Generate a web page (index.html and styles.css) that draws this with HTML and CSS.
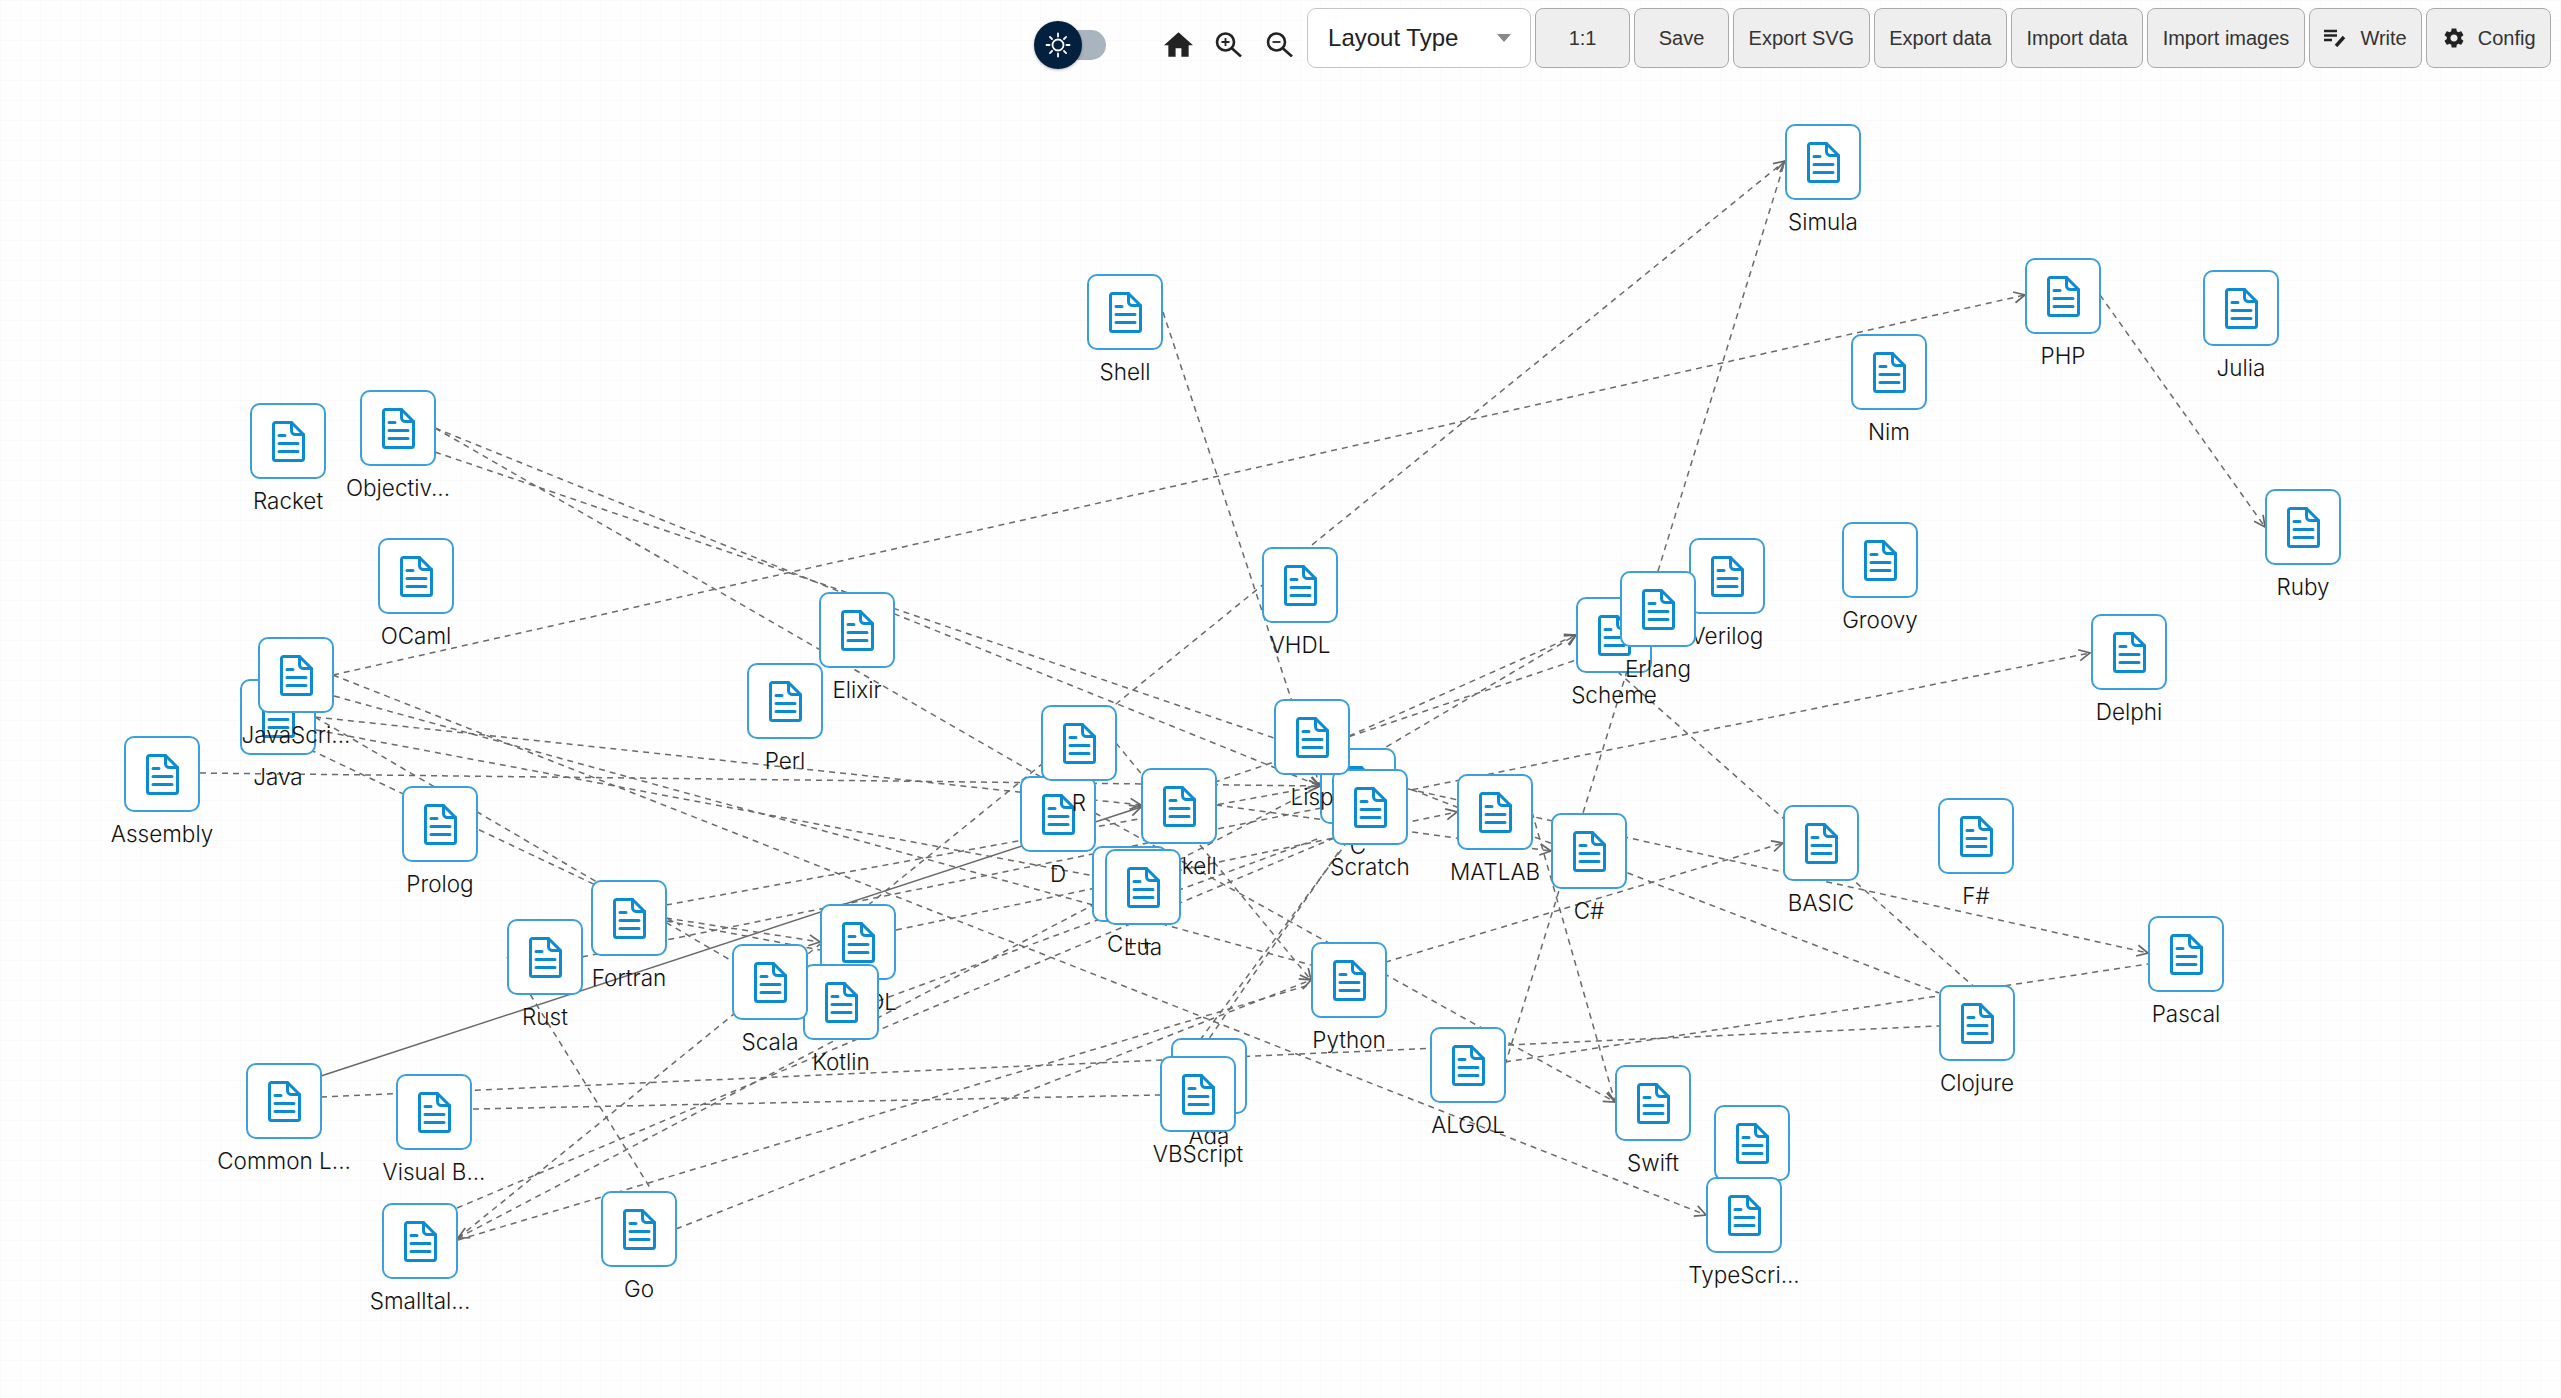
FILE: index.html
```html
<!DOCTYPE html>
<html lang="en">
<head>
<meta charset="utf-8">
<title>Graph</title>
<link rel="stylesheet" href="styles.css">
</head>
<body>
<svg class="defs" width="0" height="0" aria-hidden="true">
  <defs>
    <symbol id="doc" viewBox="0 0 33 41">
      <path class="doc-line" d="M19.5 1.5H3.5a2 2 0 0 0-2 2V37.5a2 2 0 0 0 2 2H29.5a2 2 0 0 0 2-2V13.5Z"/>
      <path class="doc-line" d="M19.5 1.5V9.5a4 4 0 0 0 4 4H31.5"/>
      <path class="doc-line" d="M7 14.5H13M7 22.5H26M7 30.5H26"/>
    </symbol>
    <marker id="arrow" markerUnits="userSpaceOnUse" markerWidth="18" markerHeight="16" refX="14" refY="8" orient="auto">
      <path class="arrowhead" d="M3 2.5L14 8L3 13.5"/>
    </marker>
  </defs>
</svg>

<main class="canvas">
  <svg class="edges" width="2561" height="1398" viewBox="0 0 2561 1398">
    <g class="edge-group">
      <line class="arrow" x1="2100" y1="295" x2="2265" y2="527"/>
      <line class="arrow" x1="333" y1="675" x2="2025" y2="295"/>
      <line class="arrow" x1="458" y1="1238" x2="1785" y2="161"/>
      <line class="arrow" x1="1163" y1="312" x2="1320" y2="786"/>
      <line class="arrow" x1="1505" y1="1065" x2="1785" y2="161"/>
      <line x1="1576" y1="635" x2="2015" y2="1023"/>
      <line class="arrow" x1="1349" y1="736" x2="1576" y2="635"/>
      <line class="arrow" x1="1320" y1="786" x2="1576" y2="635"/>
      <line class="solid arrow" x1="321" y1="1076" x2="1141" y2="807"/>
      <line x1="1141" y1="807" x2="1576" y2="660"/>
      <line class="arrow" x1="666" y1="918" x2="820" y2="942"/>
      <line x1="666" y1="921" x2="820" y2="950"/>
      <line x1="666" y1="905" x2="1320" y2="786"/>
      <line x1="315" y1="717" x2="807" y2="1005"/>
      <line x1="300" y1="745" x2="680" y2="925"/>
      <line class="arrow" x1="315" y1="717" x2="1141" y2="805"/>
      <line class="arrow" x1="200" y1="773" x2="1320" y2="786"/>
      <line class="arrow" x1="333" y1="675" x2="1706" y2="1215"/>
      <line x1="334" y1="696" x2="1311" y2="965"/>
      <line x1="316" y1="730" x2="1105" y2="878"/>
      <line class="arrow" x1="435" y1="428" x2="1320" y2="786"/>
      <line x1="435" y1="452" x2="1274" y2="738"/>
      <line x1="435" y1="428" x2="1095" y2="808"/>
      <line class="arrow" x1="1116" y1="743" x2="1311" y2="980"/>
      <line class="arrow" x1="1095" y1="813" x2="1615" y2="1102"/>
      <line class="arrow" x1="1532" y1="812" x2="1615" y2="1102"/>
      <line class="arrow" x1="1320" y1="786" x2="458" y2="1238"/>
      <line x1="457" y1="1208" x2="1334" y2="838"/>
      <line class="arrow" x1="896" y1="930" x2="1457" y2="812"/>
      <line x1="878" y1="1001" x2="1320" y2="838"/>
      <line class="arrow" x1="1216" y1="805" x2="1551" y2="851"/>
      <line class="arrow" x1="1300" y1="765" x2="2148" y2="953"/>
      <line x1="1340" y1="762" x2="1939" y2="993"/>
      <line class="arrow" x1="582" y1="957" x2="2090" y2="653"/>
      <line class="arrow" x1="458" y1="1240" x2="1783" y2="843"/>
      <line class="arrow" x1="676" y1="1229" x2="1311" y2="980"/>
      <line x1="321" y1="1097" x2="1939" y2="1026"/>
      <line x1="473" y1="1109" x2="1160" y2="1095"/>
      <line x1="1505" y1="1062" x2="2148" y2="964"/>
      <line x1="507" y1="957" x2="652" y2="1191"/>
      <line x1="1200" y1="1040" x2="1345" y2="845"/>
      <line x1="1197" y1="1056" x2="1340" y2="850"/>
    </g>
  </svg>

  <div class="node" style="left:1785px;top:124px"><div class="box"><svg class="doc"><use href="#doc"/></svg></div><span class="label">Simula</span></div>
  <div class="node" style="left:1087px;top:274px"><div class="box"><svg class="doc"><use href="#doc"/></svg></div><span class="label">Shell</span></div>
  <div class="node" style="left:2025px;top:258px"><div class="box"><svg class="doc"><use href="#doc"/></svg></div><span class="label">PHP</span></div>
  <div class="node" style="left:2203px;top:270px"><div class="box"><svg class="doc"><use href="#doc"/></svg></div><span class="label">Julia</span></div>
  <div class="node" style="left:1851px;top:334px"><div class="box"><svg class="doc"><use href="#doc"/></svg></div><span class="label">Nim</span></div>
  <div class="node" style="left:2265px;top:489px"><div class="box"><svg class="doc"><use href="#doc"/></svg></div><span class="label">Ruby</span></div>
  <div class="node" style="left:250px;top:403px"><div class="box"><svg class="doc"><use href="#doc"/></svg></div><span class="label">Racket</span></div>
  <div class="node" style="left:360px;top:390px"><div class="box"><svg class="doc"><use href="#doc"/></svg></div><span class="label">Objectiv...</span></div>
  <div class="node" style="left:378px;top:538px"><div class="box"><svg class="doc"><use href="#doc"/></svg></div><span class="label">OCaml</span></div>
  <div class="node" style="left:1689px;top:538px"><div class="box"><svg class="doc"><use href="#doc"/></svg></div><span class="label">Verilog</span></div>
  <div class="node" style="left:1842px;top:522px"><div class="box"><svg class="doc"><use href="#doc"/></svg></div><span class="label">Groovy</span></div>
  <div class="node" style="left:1576px;top:597px"><div class="box"><svg class="doc"><use href="#doc"/></svg></div><span class="label">Scheme</span></div>
  <div class="node" style="left:1620px;top:571px"><div class="box"><svg class="doc"><use href="#doc"/></svg></div><span class="label">Erlang</span></div>
  <div class="node" style="left:1262px;top:547px"><div class="box"><svg class="doc"><use href="#doc"/></svg></div><span class="label">VHDL</span></div>
  <div class="node" style="left:819px;top:592px"><div class="box"><svg class="doc"><use href="#doc"/></svg></div><span class="label">Elixir</span></div>
  <div class="node" style="left:747px;top:663px"><div class="box"><svg class="doc"><use href="#doc"/></svg></div><span class="label">Perl</span></div>
  <div class="node" style="left:2091px;top:614px"><div class="box"><svg class="doc"><use href="#doc"/></svg></div><span class="label">Delphi</span></div>
  <div class="node" style="left:240px;top:679px"><div class="box"><svg class="doc"><use href="#doc"/></svg></div><span class="label">Java</span></div>
  <div class="node" style="left:258px;top:637px"><div class="box"><svg class="doc"><use href="#doc"/></svg></div><span class="label">JavaScri...</span></div>
  <div class="node" style="left:124px;top:736px"><div class="box"><svg class="doc"><use href="#doc"/></svg></div><span class="label">Assembly</span></div>
  <div class="node" style="left:1020px;top:776px"><div class="box"><svg class="doc"><use href="#doc"/></svg></div><span class="label">D</span></div>
  <div class="node" style="left:1041px;top:705px"><div class="box"><svg class="doc"><use href="#doc"/></svg></div><span class="label">R</span></div>
  <div class="node" style="left:1320px;top:748px"><div class="box"><svg class="doc"><use href="#doc"/></svg></div><span class="label">C</span></div>
  <div class="node" style="left:1332px;top:769px"><div class="box"><svg class="doc"><use href="#doc"/></svg></div><span class="label">Scratch</span></div>
  <div class="node" style="left:1274px;top:699px"><div class="box"><svg class="doc"><use href="#doc"/></svg></div><span class="label">Lisp</span></div>
  <div class="node" style="left:1141px;top:768px"><div class="box"><svg class="doc"><use href="#doc"/></svg></div><span class="label">Haskell</span></div>
  <div class="node" style="left:1457px;top:774px"><div class="box"><svg class="doc"><use href="#doc"/></svg></div><span class="label">MATLAB</span></div>
  <div class="node" style="left:1551px;top:813px"><div class="box"><svg class="doc"><use href="#doc"/></svg></div><span class="label">C#</span></div>
  <div class="node" style="left:1783px;top:805px"><div class="box"><svg class="doc"><use href="#doc"/></svg></div><span class="label">BASIC</span></div>
  <div class="node" style="left:1938px;top:798px"><div class="box"><svg class="doc"><use href="#doc"/></svg></div><span class="label">F#</span></div>
  <div class="node" style="left:402px;top:786px"><div class="box"><svg class="doc"><use href="#doc"/></svg></div><span class="label">Prolog</span></div>
  <div class="node" style="left:591px;top:880px"><div class="box"><svg class="doc"><use href="#doc"/></svg></div><span class="label">Fortran</span></div>
  <div class="node" style="left:507px;top:919px"><div class="box"><svg class="doc"><use href="#doc"/></svg></div><span class="label">Rust</span></div>
  <div class="node" style="left:820px;top:904px"><div class="box"><svg class="doc"><use href="#doc"/></svg></div><span class="label">COBOL</span></div>
  <div class="node" style="left:803px;top:964px"><div class="box"><svg class="doc"><use href="#doc"/></svg></div><span class="label">Kotlin</span></div>
  <div class="node" style="left:732px;top:944px"><div class="box"><svg class="doc"><use href="#doc"/></svg></div><span class="label">Scala</span></div>
  <div class="node" style="left:1092px;top:846px"><div class="box"><svg class="doc"><use href="#doc"/></svg></div><span class="label">C++</span></div>
  <div class="node" style="left:1105px;top:849px"><div class="box"><svg class="doc"><use href="#doc"/></svg></div><span class="label">Lua</span></div>
  <div class="node" style="left:2148px;top:916px"><div class="box"><svg class="doc"><use href="#doc"/></svg></div><span class="label">Pascal</span></div>
  <div class="node" style="left:1939px;top:985px"><div class="box"><svg class="doc"><use href="#doc"/></svg></div><span class="label">Clojure</span></div>
  <div class="node" style="left:1311px;top:942px"><div class="box"><svg class="doc"><use href="#doc"/></svg></div><span class="label">Python</span></div>
  <div class="node" style="left:1430px;top:1027px"><div class="box"><svg class="doc"><use href="#doc"/></svg></div><span class="label">ALGOL</span></div>
  <div class="node" style="left:1615px;top:1065px"><div class="box"><svg class="doc"><use href="#doc"/></svg></div><span class="label">Swift</span></div>
  <div class="node" style="left:1171px;top:1038px"><div class="box"><svg class="doc"><use href="#doc"/></svg></div><span class="label">Ada</span></div>
  <div class="node" style="left:1160px;top:1056px"><div class="box"><svg class="doc"><use href="#doc"/></svg></div><span class="label">VBScript</span></div>
  <div class="node" style="left:246px;top:1063px"><div class="box"><svg class="doc"><use href="#doc"/></svg></div><span class="label">Common L...</span></div>
  <div class="node" style="left:396px;top:1074px"><div class="box"><svg class="doc"><use href="#doc"/></svg></div><span class="label">Visual B...</span></div>
  <div class="node" style="left:382px;top:1203px"><div class="box"><svg class="doc"><use href="#doc"/></svg></div><span class="label">Smalltal...</span></div>
  <div class="node" style="left:601px;top:1191px"><div class="box"><svg class="doc"><use href="#doc"/></svg></div><span class="label">Go</span></div>
  <div class="node" style="left:1714px;top:1105px"><div class="box"><svg class="doc"><use href="#doc"/></svg></div><span class="label">Dart</span></div>
  <div class="node" style="left:1706px;top:1177px"><div class="box"><svg class="doc"><use href="#doc"/></svg></div><span class="label">TypeScri...</span></div>
</main>

<header class="toolbar">
  <div class="toggle">
    <span class="toggle-track"></span>
    <span class="toggle-thumb">
      <svg class="sun" viewBox="0 0 26 26">
        <circle cx="13" cy="13" r="5.5"/>
        <path d="M13 1.5V4.5M13 21.5V24.5M1.5 13H4.5M21.500 13H24.500M4.900 4.900L7 7M19 19L21.100 21.100M4.900 21.100L7 19M19 7L21.100 4.900"/>
      </svg>
    </span>
  </div>
  <svg class="tool-icon home" viewBox="2 3 20 17"><path d="M10 20v-6h4v6h5v-8h3L12 3 2 12h3v8z"/></svg>
  <svg class="tool-icon zoom-in" viewBox="0 0 27 25">
    <circle cx="10.500" cy="10" r="8.500"/><path d="M16.500 16L26 24.500"/><path class="thin" d="M10.500 6V14M6.500 10H14.500"/>
  </svg>
  <svg class="tool-icon zoom-out" viewBox="0 0 27 25">
    <circle cx="10.500" cy="10" r="8.500"/><path d="M16.500 16L26 24.500"/><path class="thin" d="M6.500 10H14.500"/>
  </svg>
  <div class="select"><span>Layout Type</span><i class="caret"></i></div>
  <button class="btn btn-wide">1:1</button>
  <button class="btn btn-wide">Save</button>
  <button class="btn">Export SVG</button>
  <button class="btn">Export data</button>
  <button class="btn">Import data</button>
  <button class="btn">Import images</button>
  <button class="btn">
    <svg class="btn-icon write" viewBox="0 0 22 18"><path d="M0 2H13M0 6.500H13M0 11H8"/><path class="pen" d="M12 17L20 8"/></svg>Write
  </button>
  <button class="btn">
    <svg class="btn-icon gear" viewBox="0 0 24 24"><path d="M19.140 12.940c.04-.3.06-.61.06-.94 0-.32-.02-.64-.07-.94l2.030-1.580c.18-.14.23-.41.12-.61l-1.920-3.320c-.12-.22-.37-.29-.59-.22l-2.390.96c-.5-.38-1.030-.7-1.620-.94l-.36-2.540c-.04-.24-.24-.41-.48-.41h-3.840c-.24 0-.43.17-.47.41l-.36 2.540c-.59.24-1.130.57-1.620.94l-2.390-.96c-.22-.08-.47 0-.59.22L2.740 8.870c-.12.21-.08.47.12.61l2.030 1.580c-.05.3-.09.63-.09.94s.02.64.07.94l-2.030 1.580c-.18.14-.23.41-.12.61l1.920 3.320c.12.22.37.29.59.22l2.390-.96c.5.38 1.030.7 1.620.94l.36 2.540c.05.24.24.41.48.41h3.840c.24 0 .44-.17.47-.41l.36-2.540c.59-.24 1.130-.56 1.620-.94l2.390.96c.22.08.47 0 .59-.22l1.920-3.320c.12-.22.07-.47-.12-.61l-2.010-1.580zM12 15.600c-1.980 0-3.600-1.620-3.600-3.600s1.620-3.600 3.600-3.600 3.600 1.620 3.600 3.600-1.620 3.600-3.600 3.600z"/></svg>Config
  </button>
</header>
</body>
</html>
```
FILE: styles.css
```css
* { box-sizing: border-box; }

html, body {
  margin: 0;
  height: 100%;
  overflow: hidden;
  background: #fff;
}

.defs { position: absolute; }

.canvas {
  position: absolute;
  inset: 0;
  background-color: #fefefe;
  background-image:
    linear-gradient(rgba(0, 0, 0, 0.014) 1px, transparent 1px),
    linear-gradient(90deg, rgba(0, 0, 0, 0.014) 1px, transparent 1px);
  background-size: 20px 20px;
}

.edges { position: absolute; left: 0; top: 0; }

.edge-group line {
  stroke: #6a6a6a;
  stroke-width: 1.5;
  stroke-dasharray: 6 5;
  fill: none;
}
.edge-group line.arrow { marker-end: url(#arrow); }
.edge-group line.solid { stroke-dasharray: none; stroke-width: 1.4; stroke: #666; }

.arrowhead { fill: none; stroke: #666; stroke-width: 1.7; }

.node {
  position: absolute;
  width: 76px;
  display: flex;
  flex-direction: column;
  align-items: center;
}

.box {
  width: 76px;
  height: 76px;
  border: 2px solid #3a9fdb;
  border-radius: 10px;
  background: #fff;
  display: flex;
  align-items: center;
  justify-content: center;
}

.doc { width: 33px; height: 41px; display: block; }
.doc-line {
  fill: none;
  stroke: #0d8bd1;
  stroke-width: 3;
  stroke-linecap: round;
  stroke-linejoin: round;
}

.label {
  margin-top: 8px;
  font-family: Inter, "Liberation Sans", sans-serif;
  font-size: 22.5px;
  font-weight: 300;
  line-height: 28px;
  color: #111;
  white-space: nowrap;
}

.toolbar {
  position: relative;
  height: 76px;
  padding: 8px 10px 0 0;
  display: flex;
  justify-content: flex-end;
  align-items: flex-start;
  gap: 4px;
  font-family: "Liberation Sans", Arial, sans-serif;
}

.toggle {
  position: relative;
  width: 72px;
  height: 48px;
  margin: 13px 54px 0 0;
}
.toggle-track {
  position: absolute;
  left: 26px;
  top: 9px;
  width: 46px;
  height: 30px;
  border-radius: 0 15px 15px 0;
  background: #aab4bf;
}
.toggle-thumb {
  position: absolute;
  left: 0;
  top: 0;
  width: 48px;
  height: 48px;
  border-radius: 50%;
  background: #04203f;
  box-shadow: 0 1px 3px rgba(0, 0, 0, 0.3);
  display: flex;
  align-items: center;
  justify-content: center;
}
.sun { width: 26px; height: 26px; fill: none; stroke: #fff; stroke-width: 1.8; stroke-linecap: round; }

.tool-icon { display: block; height: 25px; margin-top: 24px; fill: none; stroke: #222; stroke-width: 2.6; }
.tool-icon .thin { stroke-width: 1.8; }
.home { width: 29px; fill: #222; stroke: none; margin-right: 18px; }
.zoom-in { width: 27px; margin-right: 20px; }
.zoom-out { width: 27px; margin-right: 10px; }

.select {
  width: 224px;
  height: 60px;
  border: 1.5px solid #c4c4c4;
  border-radius: 9px;
  background: #fff;
  padding: 0 19px 0 20px;
  display: flex;
  align-items: center;
  justify-content: space-between;
  font-size: 24px;
  color: #222;
}
.caret {
  width: 0;
  height: 0;
  border-left: 7px solid transparent;
  border-right: 7px solid transparent;
  border-top: 8px solid #888;
}

.btn {
  height: 60px;
  padding: 0 14.5px;
  border: 1.5px solid #aaa;
  border-radius: 8px;
  background: #eee;
  display: flex;
  align-items: center;
  justify-content: center;
  font-family: inherit;
  font-size: 20px;
  color: #333;
}
.btn-wide { width: 95px; }

.btn-icon { display: block; margin-right: 14px; }
.write { width: 22px; height: 18px; fill: none; stroke: #222; stroke-width: 2.4; }
.write .pen { stroke-width: 3.4; }
.gear { width: 24px; height: 24px; fill: #222; margin-right: 12px; }
```
